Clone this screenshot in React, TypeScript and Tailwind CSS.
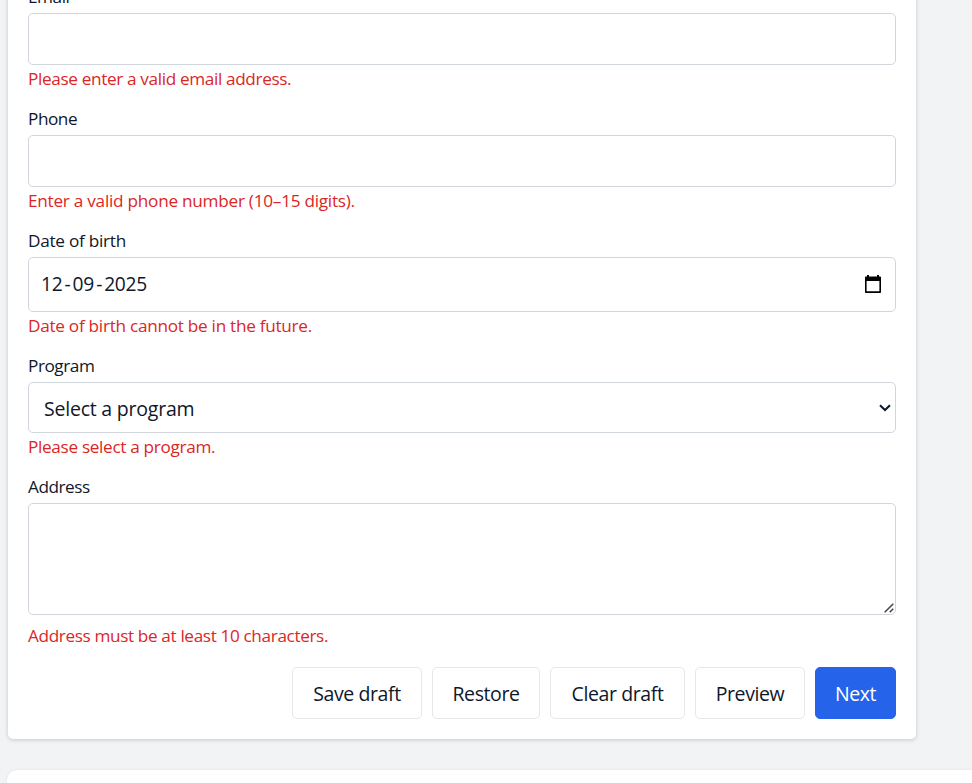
import type { ReactNode } from "react";

const controlBase = "w-full rounded-[5px] border border-gray-300 bg-white";

type FieldProps = {
  label: string;
  error: string;
  labelTracking?: string;
  errorTracking: string;
  gap?: string;
  children: ReactNode;
};

function Field({ label, error, labelTracking = "tracking-[-0.45px]", errorTracking, gap = "", children }: FieldProps) {
  return (
    <div className="flex flex-col">
      <div className={`mb-[5px] h-[25px] leading-[27px] whitespace-nowrap ${labelTracking}`}>{label}</div>
      {children}
      <div className={`h-[25px] leading-[27px] whitespace-nowrap text-[#dc2626] ${errorTracking} ${gap}`}>{error}</div>
    </div>
  );
}

function CalendarIcon() {
  return (
    <svg width="18" height="20" viewBox="0 0 18 20" className="mb-[2px] shrink-0">
      <path
        fill="#000"
        fillRule="evenodd"
        d="M3 1h2v1.5h8V1h2v1.5h1.2q.8 0 .8.8v14.9q0 .8-.8.8H1.8q-.8 0-.8-.8V3.3q0-.8.8-.8H3zM2.6 7v10.3h12.8V7z"
      />
    </svg>
  );
}

function ChevronIcon() {
  return (
    <svg width="12" height="8" viewBox="0 0 12 8" className="shrink-0">
      <path d="M1 1.2 6 6l5-4.8" fill="none" stroke="#0f172a" strokeWidth="2" />
    </svg>
  );
}

function ResizeGrip() {
  return (
    <svg width="10" height="10" viewBox="0 0 10 10">
      <path d="M.7 9.3 9.3.7M5.7 9.3l3.6-3.6" fill="none" stroke="#444" strokeWidth="1.5" />
    </svg>
  );
}

const buttonBase =
  "flex h-[52px] items-center justify-center rounded-[5px] border pt-[2px] text-[19.5px] tracking-[-0.4px] whitespace-nowrap";

export default function App() {
  return (
    <div className="h-[783px] w-[972px] overflow-hidden bg-[#f2f3f5] font-['Open_Sans','Noto_Sans',sans-serif] text-[17.2px] text-[#0f172a]">
      <main className="-mt-[37px] ml-[8px] w-[908px] rounded-[5px] bg-white p-5 shadow-[0_1px_4px_rgba(0,0,0,0.18)]">
        <div className="flex flex-col gap-[15px]">
          <Field label="Email" error="Please enter a valid email address." errorTracking="tracking-[-0.36px]">
            <div className={`${controlBase} h-[52px]`} />
          </Field>
          <Field label="Phone" error="Enter a valid phone number (10–15 digits)." errorTracking="tracking-[-0.26px]">
            <div className={`${controlBase} h-[52px]`} />
          </Field>
          <Field
            label="Date of birth"
            error="Date of birth cannot be in the future."
            labelTracking="tracking-[-0.26px]"
            errorTracking="tracking-[-0.28px]"
          >
            <div className={`${controlBase} flex h-[55px] items-center justify-between pr-[13px] pl-[12px]`}>
              <div className="flex text-[19.2px] tracking-[-0.3px]">
                <span>12</span>
                <span className="mx-[2.2px]">-</span>
                <span>09</span>
                <span className="mx-[2.2px]">-</span>
                <span>2025</span>
              </div>
              <CalendarIcon />
            </div>
          </Field>
          <Field label="Program" error="Please select a program." errorTracking="tracking-[-0.33px]">
            <div className={`${controlBase} flex h-[51px] items-center justify-between pr-[4px] pl-[15px]`}>
              <span className="pt-[3px] text-[19.5px] tracking-[-0.22px]">Select a program</span>
              <ChevronIcon />
            </div>
          </Field>
          <Field
            label="Address"
            error="Address must be at least 10 characters."
            errorTracking="tracking-[-0.37px]"
            gap="mt-[7px]"
          >
            <div className={`${controlBase} flex h-[112px] items-end justify-end p-[1px]`}>
              <ResizeGrip />
            </div>
          </Field>
        </div>
        <div className="mt-5 flex justify-end gap-[10px]">
          <button className={`${buttonBase} w-[130px] border-gray-200`}>Save draft</button>
          <button className={`${buttonBase} w-[108px] border-gray-200`}>Restore</button>
          <button className={`${buttonBase} w-[135px] border-gray-200`}>Clear draft</button>
          <button className={`${buttonBase} w-[110px] border-gray-200`}>Preview</button>
          <button className={`${buttonBase} w-[81px] border-[#2563eb] bg-[#2563eb] text-white`}>Next</button>
        </div>
      </main>
      <section className="mt-[31px] ml-[7px] h-[40px] w-[1000px] rounded-[10px] bg-white shadow-[0_0_3px_rgba(0,0,0,0.08)]" />
    </div>
  );
}
